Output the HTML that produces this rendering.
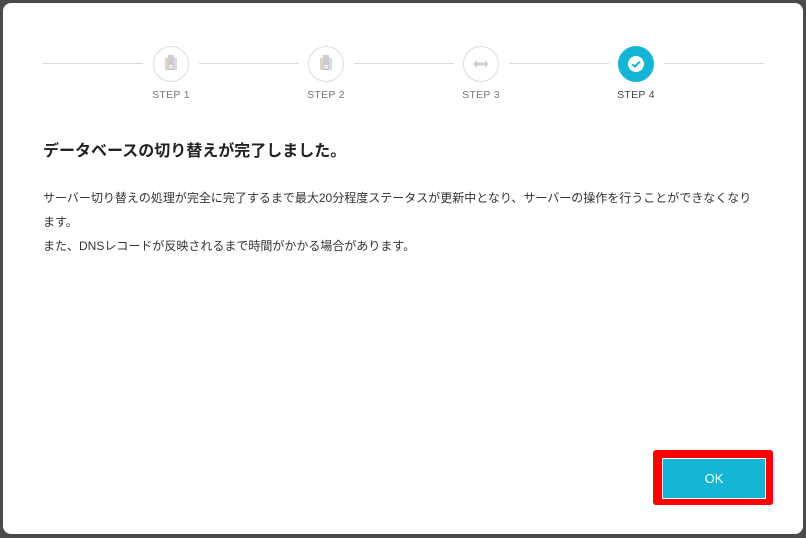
<!DOCTYPE html>
<html><head><meta charset="utf-8"><style>
html,body{margin:0;padding:0;}
body{width:806px;height:538px;background:#4a4a4a;position:relative;overflow:hidden;font-family:"Liberation Sans","Noto Sans CJK JP",sans-serif;}
.modal{position:absolute;left:3px;top:3px;width:800px;height:531px;background:#fff;border-radius:8px;}
.line{position:absolute;top:60px;height:1px;background:#d9d9d9;}
.c{position:absolute;top:43px;width:34px;height:34px;border:1px solid #dcdcdc;border-radius:50%;background:#fff;}
.c.on{background:#15b5d5;border-color:#15b5d5;}
.lab{position:absolute;top:86px;width:80px;text-align:center;font-size:10.5px;color:#777;letter-spacing:.3px;}
h1{position:absolute;left:40px;top:134px;margin:0;font-size:16px;font-weight:bold;color:#222;}
.body{position:absolute;left:40px;top:183px;width:716px;font-size:12px;line-height:24px;color:#333;}
.red{position:absolute;left:650px;top:447px;width:120px;height:55px;background:#f00;border-radius:3px;}
.btn{position:absolute;left:659px;top:455px;width:102px;height:39px;background:#15b5d5;border:1px solid #fff;color:#fff;font-size:13px;text-align:center;line-height:39px;}
</style></head><body>
<div class="modal">
<div class="line" style="left:40px;width:100px"></div>
<div class="line" style="left:196px;width:100px"></div>
<div class="line" style="left:351px;width:100px"></div>
<div class="line" style="left:506px;width:100px"></div>
<div class="line" style="left:661px;width:100px"></div>

<div class="c" style="left:150px"><svg width="34" height="34" viewBox="0 0 34 34"><rect x="11" y="11" width="4" height="12" fill="#e4cfcf"/><rect x="19" y="11" width="4" height="12" fill="#d4dbe4"/><rect x="14" y="8" width="6" height="15" fill="#ccc"/><rect x="15" y="18" width="4" height="1" fill="#fff"/><rect x="15" y="20" width="4" height="1" fill="#fff"/></svg></div>
<div class="c" style="left:305px"><svg width="34" height="34" viewBox="0 0 34 34"><rect x="11" y="11" width="4" height="12" fill="#e4cfcf"/><rect x="19" y="11" width="4" height="12" fill="#d4dbe4"/><rect x="14" y="8" width="6" height="15" fill="#ccc"/><rect x="15" y="18" width="4" height="1" fill="#fff"/><rect x="15" y="20" width="4" height="1" fill="#fff"/></svg></div>
<div class="c" style="left:460px"><svg width="34" height="34" viewBox="0 0 34 34"><path d="M9 17 L13 13 L13 15.5 L21 15.5 L21 13 L25 17 L21 21 L21 18.5 L13 18.5 L13 21 Z" fill="#d0d0d0"/></svg></div>
<div class="c on" style="left:615px"><svg width="34" height="34" viewBox="0 0 34 34"><circle cx="17" cy="17" r="8" fill="#fff"/><path d="M13.2 17.2 L15.8 19.6 L20.8 14.6" stroke="#15b5d5" stroke-width="2" fill="none"/></svg></div>

<div class="lab" style="left:128px">STEP 1</div>
<div class="lab" style="left:283px">STEP 2</div>
<div class="lab" style="left:438px">STEP 3</div>
<div class="lab" style="left:593px;color:#444">STEP 4</div>

<h1>データベースの切り替えが完了しました。</h1>
<div class="body">サーバー切り替えの処理が完全に完了するまで最大20分程度ステータスが更新中となり、サーバーの操作を行うことができなくなり<br>ます。<br>また、DNSレコードが反映されるまで時間がかかる場合があります。</div>
<div class="red"></div>
<div class="btn">OK</div>
</div>
</body></html>
